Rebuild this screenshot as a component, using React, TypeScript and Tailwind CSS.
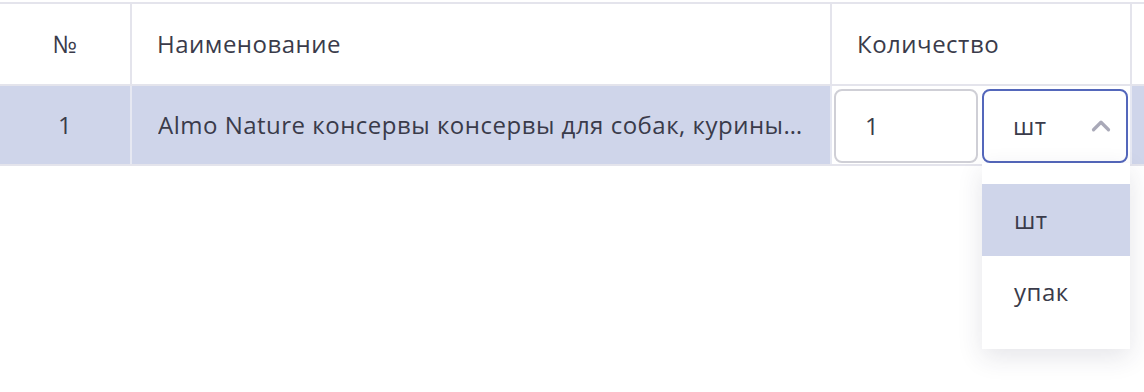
import { ChevronUp } from 'lucide-react'

const font = { fontFamily: '"Open Sans", "Noto Sans", sans-serif' }

export default function App() {
  return (
    <div className="relative w-[1144px] h-[392px] bg-white pt-[2px] text-[24px] tracking-[0.5px] text-[#3a3b4a]" style={font}>
      {/* header */}
      <div className="flex h-[84px] border-t-2 border-b-2 border-[#e4e4ec]">
        <div className="w-[132px] shrink-0 border-r-2 border-[#e4e4ec] flex items-center justify-center">№</div>
        <div className="w-[700px] shrink-0 border-r-2 border-[#e4e4ec] flex items-center pl-[25px]">Наименование</div>
        <div className="w-[300px] shrink-0 border-r-2 border-[#e4e4ec] flex items-center pl-[25px]">Количество</div>
        <div className="flex-1" />
      </div>

      {/* row */}
      <div className="flex h-[80px] border-b-2 border-[#e4e4ec] bg-[#cfd5ea]">
        <div className="w-[132px] shrink-0 border-r-2 border-[#e6e8f2] flex items-center justify-center">1</div>
        <div className="w-[700px] shrink-0 border-r-2 border-[#e6e8f2] flex items-center pl-[26px] pr-[14px] min-w-0">
          <span className="truncate">Almo Nature консервы консервы для собак, куриные бедрышки</span>
        </div>
        <div className="w-[300px] shrink-0 border-r-2 border-[#e6e8f2] flex gap-[4px] pt-[3px] pb-[1px] pl-[2px] pr-[2px] bg-white">
          <div className="w-[144px] rounded-[8px] border-2 border-[#cfcfd6] bg-white flex items-center pl-[29px]">1</div>
          <div className="w-[146px] rounded-[8px] border-2 border-[#5467bb] bg-white flex items-center justify-between pl-[29px] pr-[10px]">
            <span>шт</span>
            <ChevronUp className="w-[30px] h-[30px] text-[#a9a9b8]" strokeWidth={2.6} />
          </div>
        </div>
        <div className="flex-1" />
      </div>

      {/* dropdown */}
      <div className="absolute left-[982px] top-[163px] w-[148px] bg-white py-[21px] shadow-[0_8px_24px_rgba(40,40,70,0.12)]">
        <div className="h-[72px] bg-[#cfd5ea] flex items-center pl-[32px]">шт</div>
        <div className="h-[72px] flex items-center pl-[32px]">упак</div>
      </div>
    </div>
  )
}
